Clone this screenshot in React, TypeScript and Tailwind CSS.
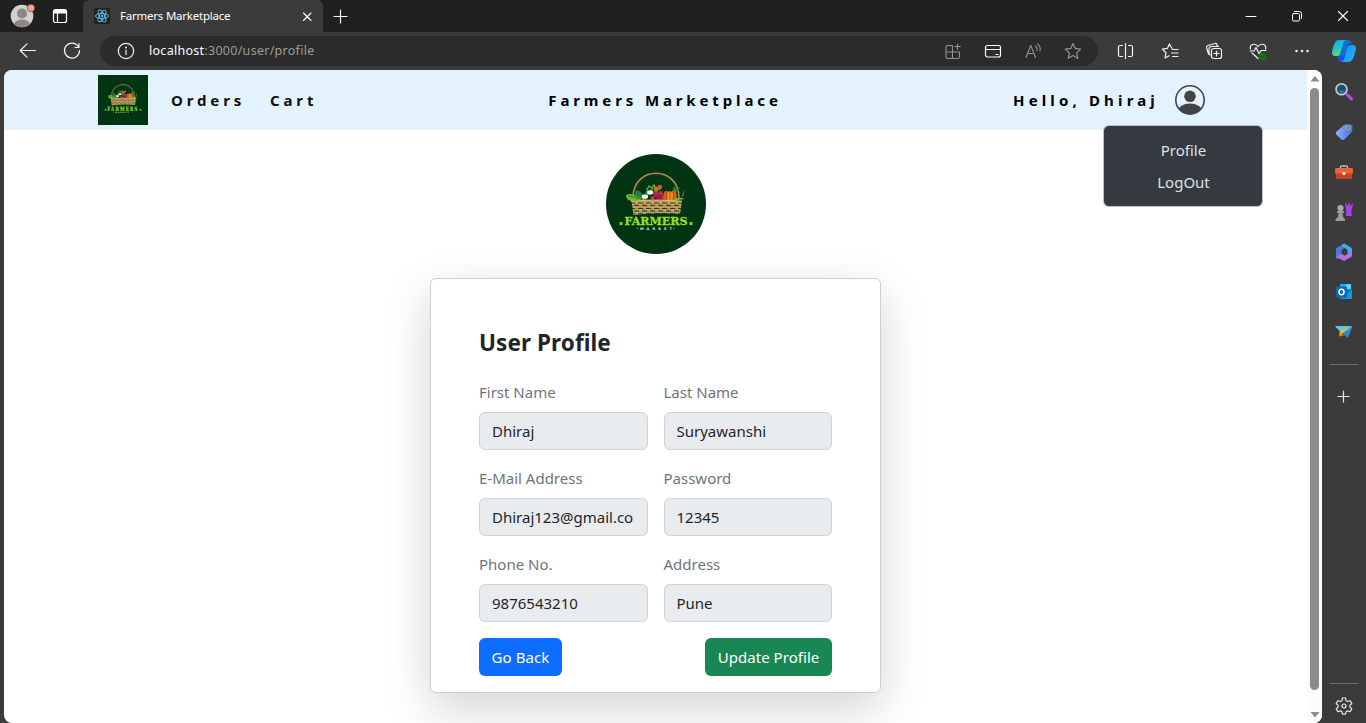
import type { ReactNode } from "react";

type IconProps = { size?: number; className?: string; children: ReactNode };

function Icon({ size = 20, className = "", children }: IconProps) {
  return (
    <svg width={size} height={size} viewBox={`0 0 ${size} ${size}`} fill="none" stroke="currentColor" strokeWidth="1.2" strokeLinecap="round" strokeLinejoin="round" className={`shrink-0 ${className}`}>
      {children}
    </svg>
  );
}

function FarmersLogo({ size, round = false, id }: { size: number; round?: boolean; id: string }) {
  return (
    <svg width={size} height={size} viewBox="0 0 100 100" className={round ? "rounded-full" : ""}>
      <defs>
        <pattern id={`${id}-weave`} width="8" height="5.4" patternUnits="userSpaceOnUse">
          <rect width="8" height="5.4" fill="#c9a362" />
          <path d="M0 .3h5M4 3h5M0 3h1" stroke="#173717" strokeWidth="1" />
          <path d="M6 0v2.4M2 3v2.4" stroke="#71602f" strokeWidth=".6" />
        </pattern>
        <pattern id={`${id}-bg`} width="19" height="16" patternUnits="userSpaceOnUse" patternTransform="rotate(-12)">
          <path d="M4 9l4-5" stroke="#12421f" strokeWidth=".7" />
        </pattern>
      </defs>
      <rect width="100" height="100" fill="#003412" />
      <rect width="100" height="100" fill={`url(#${id}-bg)`} />
      <path d="M27 44C27 11 73 11 73 44" fill="none" stroke="#b08d54" strokeWidth="1.600" />
      <path d="M28.300 43C29 13 71 13 71.700 43" fill="none" stroke="#4c4b22" strokeWidth=".5" />
      <path d="M29 45Q28 37 31 36Q38 39 38 45M39 40l2-7 2 5 4-7 0 7 5-5 0 7M66 38l2-6 3 3 3-2-2 5M75 44l3-9 0 6" fill="#24813a" />
      <path d="M41 36l2-4 3 2 2-3 2 5 4-1" stroke="#55ba34" strokeWidth="1.3" fill="none" />
      <circle cx="50" cy="35" r="2.400" fill="#e46a20" />
      <circle cx="54" cy="33" r="2.200" fill="#dc5823" />
      <ellipse cx="44" cy="38.500" rx="3" ry="2.2" fill="#f8faef" />
      <ellipse cx="39" cy="42.500" rx="3.2" ry="2.3" fill="#f5f6e7" />
      <circle cx="50" cy="41" r="2.6" fill="#b51e49" />
      <circle cx="54.500" cy="39.500" r="2.4" fill="#c92754" />
      <circle cx="53" cy="44" r="2.6" fill="#9a173f" />
      <circle cx="57.500" cy="43.500" r="2.3" fill="#cc2752" />
      <circle cx="46.500" cy="44" r="2" fill="#cb3455" />
      <ellipse cx="60.500" cy="41.500" rx="3.2" ry="4.6" fill="#d96016" />
      <ellipse cx="67.500" cy="41.500" rx="3.2" ry="4.6" fill="#df6415" />
      <ellipse cx="64" cy="42" rx="3" ry="4.8" fill="#f58b1d" />
      <path d="M64 38v8M60.500 38v7M67.500 38v7" stroke="#943e12" strokeWidth=".6" />
      <path d="M20 41q6-3 11 2l10 3-16 1q-5-1-5-6M66 46q5-4 13-1l-7 1q-4 3-8 1" fill="#6cbd2d" />
      <path d="M22 42q8 1 15 4M25 48q5-3 12-1" stroke="#235d20" strokeWidth=".8" fill="none" />
      <path d="M25.500 47Q50 45 76 47L74 60Q50 58 27.500 61Z" fill={`url(#${id}-weave)`} />
      <path d="M25 47.300Q50 45 76 47.300" stroke="#dfb571" strokeWidth="1.3" fill="none" />
      <g fill="#95df25" stroke="#95df25" strokeWidth=".35" fontFamily="DejaVu Serif" fontWeight="700" fontSize="11.8">
        <text x="18.500" y="71.200" textLength="63" lengthAdjust="spacingAndGlyphs">FARMERS</text>
      </g>
      <path d="M13.500 68h3v3h-3zM83.500 68h3v3h-3z" fill="#85cf27" />
      <text x="34" y="75.800" textLength="32" fill="#dce7d4" fontFamily="DejaVu Sans" fontWeight="700" fontSize="3.6">MARKET</text>
      <path d="M31 74.500h1M67.500 74.500h1" stroke="#dce7d4" strokeWidth=".8" />
    </svg>
  );
}

function TitleBar() {
  return (
    <div className="flex h-8 shrink-0 bg-[#202020] text-white">
      <div className="flex w-[83px] items-center pl-[10px]">
        <svg width="26" height="26" viewBox="0 0 26 26">
          <defs><clipPath id="account"><circle cx="12" cy="13" r="11.300" /></clipPath></defs>
          <circle cx="12" cy="13" r="11.300" fill="#d3d1ce" />
          <g fill="#8b8886" clipPath="url(#account)"><circle cx="12" cy="10.500" r="5" /><ellipse cx="12" cy="21.500" rx="8" ry="5" /></g>
          <circle cx="21" cy="5" r="3.800" fill="#ff9e98" stroke="#202020" strokeWidth=".5" />
        </svg>
        <Icon size={16} className="ml-[16px]">
          <rect x="1.500" y="1.500" width="13" height="13" rx="2" />
          <path d="M2 2.500h12v2.500H2z" fill="currentColor" /><path d="M5.500 5v9" />
        </Icon>
      </div>
      <div className="flex w-[240px] items-center rounded-t-md bg-[#3b3b3b] pr-[10px] pl-[11px]">
        <svg width="16" height="16" viewBox="0 0 16 16" fill="none" stroke="#5bc4e0" strokeWidth=".9">
          <rect width="16" height="16" rx="1.500" fill="#202226" stroke="none" />
          <ellipse cx="8" cy="8" rx="6.600" ry="2.600" /><ellipse cx="8" cy="8" rx="6.600" ry="2.600" transform="rotate(60 8 8)" /><ellipse cx="8" cy="8" rx="6.600" ry="2.600" transform="rotate(120 8 8)" />
          <circle cx="8" cy="8" r="1.200" fill="#5bc4e0" stroke="none" />
        </svg>
        <span className="ml-[10px] flex-1 text-[11.5px] tracking-[-0.22px] whitespace-nowrap">Farmers Marketplace</span>
        <Icon size={12}><path d="M2.500 3l7.500 7.500M10 3l-7.500 7.500" strokeWidth="1.100" /></Icon>
      </div>
      <div className="flex flex-1 items-center pl-[9px]"><Icon size={16}><path d="M8.500 2v13M2 8.500h13" /></Icon></div>
      <div className="flex">
        <div className="flex w-[46px] items-center justify-center"><Icon size={12}><path d="M1 6.500h10" strokeWidth="1" /></Icon></div>
        <div className="flex w-[46px] items-center justify-center"><Icon size={12}><rect x="1.500" y="3.500" width="7" height="7.500" rx="1.200" strokeWidth="1" /><path d="M3.500 1.500h5q2 0 2 2v5" strokeWidth="1" /></Icon></div>
        <div className="flex w-[46px] items-center justify-center"><Icon size={12}><path d="M1.500 1.500l9 9M10.500 1.500l-9 9" strokeWidth="1.100" /></Icon></div>
      </div>
    </div>
  );
}

function Toolbar() {
  return (
    <div className="flex h-[38px] shrink-0 items-center text-[#f2f2f2]">
      <div className="flex w-[100px] items-center gap-[24px] pl-[18px]">
        <Icon><path d="M17.500 9.500H2.500M9 2.800L2.300 9.500 9 16.200" /></Icon>
        <Icon><path d="M16.300 5.500A7.500 7.500 0 1 0 17.500 9.500M17 2.500v4h-4" /></Icon>
      </div>
      <div className="flex h-[30px] flex-1 items-center rounded-full bg-[#2b2b2b] pr-[5px] pl-[16px]">
        <Icon><circle cx="10" cy="10" r="7.700" /><path d="M10 9v4.500" /><circle cx="10" cy="6.500" r=".4" fill="currentColor" /></Icon>
        <span className="ml-[13px] flex-1 pt-px text-[12.5px] tracking-[0.28px] text-[#9b9b9b]"><span className="text-white">localhost</span>:3000/user/profile</span>
        <div className="flex text-[#929292]">
          <div className="flex w-10 justify-center"><Icon><path d="M9.500 4.500h-5q-1.500 0-1.500 1.500v10q0 1.500 1.500 1.500H15q1.500 0 1.500-1.500v-5H3M9.500 4.500v13M14.500 3v5.500M11.700 5.500h5.600" strokeWidth="1.100" /></Icon></div>
          <div className="flex w-10 justify-center text-white"><Icon><rect x="2.500" y="4.500" width="15" height="11.500" rx="2" /><path d="M2.500 8.500h15M13 13.500h2" /></Icon></div>
          <div className="flex w-10 justify-center"><Icon><path d="M3 16.500l4.800-12 4.700 12M4.500 12.500h6.500M12.500 5q2 1.500 1.500 4.500M14.500 3q3.500 2.500 2.500 7" strokeWidth="1.100" /></Icon></div>
          <div className="flex w-10 justify-center"><Icon><path d="M10 2.500l2.300 4.900 5.400.7-4 3.800 1 5.400-4.700-2.700-4.700 2.700 1-5.400-4-3.800 5.400-.7z" /></Icon></div>
        </div>
      </div>
      <div className="flex pl-[6px]">
        <div className="flex w-11 justify-center"><Icon><path d="M6.500 4.500H4q-1.500 0-1.500 1.500v8q0 1.500 1.500 1.500h2.500M12.500 4.500H15q1.500 0 1.500 1.500v8q0 1.500-1.500 1.500h-2.500M9.500 2.500v15" /></Icon></div>
        <div className="flex w-11 justify-center"><Icon><path d="M12 7.500L9.500 3 7.300 7.400l-5 .7 3.700 3.600-.9 5.300 4-2.200M12.500 8.500H18M11.500 12h6.500M12.500 15.500H18" /></Icon></div>
        <div className="flex w-11 justify-center"><Icon><rect x="7.500" y="7.500" width="10" height="10" rx="2" /><path d="M12.500 10v5M10 12.500h5M4.500 13L2.700 7q-.5-2 1.300-2.500L11 2.500q1.500-.3 2 1l.4 1.500M6 14q-1-1-1-3V8q0-2.500 2.500-2.500h7" /></Icon></div>
        <div className="flex w-11 justify-center"><Icon><path d="M2.500 8Q1.500 4.500 4.500 3.500 8 2.500 10 5.500q2-3 5.500-2 3 1.200 2 4.500M4 12l6 5.500M2 10h4l2-3.500 3 6 2-3h5" /><circle cx="14.500" cy="15.500" r="3.700" fill="#107c10" stroke="none" /><path d="M13 15.700l1.200 1 2-2.300" stroke="#2d422d" /></Icon></div>
        <div className="flex w-11 justify-center"><Icon><g fill="currentColor" stroke="none"><circle cx="4.500" cy="10" r="1.250" /><circle cx="10" cy="10" r="1.250" /><circle cx="15.500" cy="10" r="1.250" /></g></Icon></div>
      </div>
      <div className="flex w-[42px] items-center pl-[8px]">
        <svg width="24" height="24" viewBox="0 0 24 24">
          <defs>
            <linearGradient id="co1" x2=".4" y2="1"><stop stopColor="#139fed" /><stop offset=".5" stopColor="#20bfd5" /><stop offset="1" stopColor="#67dc77" /></linearGradient>
            <linearGradient id="co2" y2="1"><stop stopColor="#218aff" /><stop offset="1" stopColor="#18b6f5" /></linearGradient>
          </defs>
          <path d="M6 18h6l4-12q1-3 4-1-1-4-4-4h-5z" fill="#0872d5" />
          <path d="M7 1h8q-3 0-4 4L8 15q-.7 2-3 2H3q-3 0-3-4Q2 4 4 2q1-1 3-1z" fill="url(#co1)" />
          <path d="M8 23q3-1 4-4l3-10q1-3 3-3h3q3 0 3 4-2 9-4 11-1 2-4 2z" fill="url(#co2)" />
          <path d="M5 17h6q2 0 3-3l-2 6q-1 3-3 3-3 0-4-6z" fill="#214ee4" />
        </svg>
      </div>
    </div>
  );
}

const sidebarIcons = [
  <g key="search"><path d="M13 12.500l4.500 4.500" stroke="#b647f2" strokeWidth="3" strokeLinecap="round" /><circle cx="7.500" cy="7.300" r="5.400" fill="#174f70" stroke="#c3c6c8" strokeWidth="1.800" /><path d="M4 8.500q3.500 5 7 0" fill="#247eaa" /></g>,
  <g key="shopping"><path d="M2 10l8-7q1-.8 3-.8l4 .2q1.500 0 1.500 2l-.2 4q0 1-1 2l-7 7q-1.500 1-3 0l-5-5q-1-1.500-.3-2.400z" fill="url(#tag)" /><circle cx="14.300" cy="6" r="1.600" fill="#514f34" stroke="#f7c923" /></g>,
  <g key="tools"><path d="M6.500 6.500V5q0-1 1-1h5q1 0 1 1v1.500" fill="none" stroke="#b9bfc3" strokeWidth="1.400" /><rect x="1" y="6" width="18" height="6" rx="1.200" fill="#ec623a" /><path d="M2 11.500h16V16q0 1-1 1H3q-1 0-1-1z" fill="#c64120" /><circle cx="10" cy="11.500" r="1.700" fill="#d6dedf" /></g>,
  <g key="games"><path d="M11 1.500h1.800v2h1.500v-2h1.800v2h1.500v-2H19l-.7 5-1 1 .5 6.500H12l.3-6z" fill="#a942eb" /><circle cx="6.500" cy="6" r="3.100" fill="#a8a8a8" /><path d="M3 9h7v2H8.500L9 15l2 2v2H1.500v-2L4 15l.5-4H3z" fill="#9a9a9a" /></g>,
  <g key="m365"><path d="M2 6.500L9 2q1-.8 2 0l3 1.800-6 3.700v7L3 17.300q-1-.8-1-2z" fill="url(#mso)" /><path d="M10 1.500l7 4q1 .5 1 2v6l-5-2.500V7.500L7.500 4z" fill="#3aaeea" /><path d="M2.500 14.500L8 11.500l2.500 2 7.500-4v4q0 1-1 1.500l-6 3.500q-1 .5-2 0L3 15.500z" fill="#af72df" /><path d="M7.500 8.200L10.500 6.500l3 1.700v3.600l-3 1.700-3-1.700z" fill="#3b3b3b" /></g>,
  <g key="outlook"><path d="M6 2h11v5H6z" fill="#28a8ea" /><path d="M12 2h5v5h-5z" fill="#50d9ff" /><path d="M5 7h13v10H5z" fill="#087cc5" /><path d="M18 8v9H7z" fill="#1596e5" /><rect x="2" y="4.500" width="11" height="11" rx="1" fill="#0967b5" /><ellipse cx="7.500" cy="10" rx="2.500" ry="2.700" fill="none" stroke="#fff" strokeWidth="1.500" /></g>,
  <g key="drop"><path d="M1 4l17.500.2L14 16l-5-4z" fill="#2a89df" /><path d="M1 4l17.500.2L6 9.500z" fill="#5fcbed" /><path d="M18 4.500L6 9l-1 5.500 3-3z" fill="#f9b719" /><path d="M5 14.500l3-3 2 2z" fill="#d47a18" /></g>,
];

function Sidebar() {
  return (
    <aside className="flex w-11 shrink-0 flex-col items-center pt-[2px] text-[#e7e7e7]">
      <svg width="0" height="0"><defs><linearGradient id="tag" x2="1"><stop stopColor="#91adff" /><stop offset="1" stopColor="#3f72e9" /></linearGradient><linearGradient id="mso" y2="1"><stop stopColor="#328fe0" /><stop offset="1" stopColor="#7652ca" /></linearGradient></defs></svg>
      {sidebarIcons.map((icon, i) => (
        <div key={i} className="flex h-10 w-full items-center justify-center"><svg width="20" height="20" viewBox="0 0 20 20">{icon}</svg></div>
      ))}
      <div className="mt-[12px] h-px w-7 bg-[#6c6c6c]" />
      <Icon className="mt-[22px]" size={20}><path d="M9.500 4v11M4 9.500h11" /></Icon>
      <div className="mt-auto h-px w-7 bg-[#6c6c6c]" />
      <Icon className="mt-[12px] mb-[7px]" size={20}>
        <path d="M8.500 2h3l.6 2.700 1.500.8 2.500-.8 1.700 2.800-1.900 1.900v1.600l1.900 1.900-1.700 2.800-2.500-.8-1.500.8-.6 2.500h-3l-.6-2.500-1.500-.8-2.500.8-1.700-2.800L4.100 11V9.400L2.200 7.500l1.700-2.800 2.500.8 1.500-.8z" /><circle cx="10" cy="10" r="2" />
      </Icon>
    </aside>
  );
}

function NavBar() {
  return (
    <nav className="relative grid h-[60px] grid-cols-3 items-center bg-[#e3f2fd] text-[15px] font-bold tracking-[3.87px] text-[#000]">
      <div className="flex items-center pl-[94px]">
        <FarmersLogo size={50} id="nav" />
        <span className="ml-[23px] w-[99px] text-[#111]">Orders</span>
        <span className="text-[#111]">Cart</span>
      </div>
      <span className="pl-[110px] whitespace-nowrap">Farmers Marketplace</span>
      <div className="flex items-center justify-end pr-[102px] whitespace-nowrap">
        <span className="w-[162px] tracking-[4.15px]">Hello, Dhiraj</span>
        <svg width="30" height="30" viewBox="0 0 30 30">
          <defs><clipPath id="user"><circle cx="15" cy="15" r="14.300" /></clipPath></defs>
          <circle cx="15" cy="11.300" r="5.800" fill="#414548" />
          <ellipse cx="15" cy="26" rx="12" ry="7.500" fill="#414548" clipPath="url(#user)" />
          <circle cx="15" cy="15" r="14.200" fill="none" stroke="#414548" strokeWidth="1.600" />
        </svg>
      </div>
      <div className="absolute top-[55px] right-[44px] z-10 flex h-[82px] w-[160px] flex-col items-center rounded-md border border-[#bfc2c5] bg-[#343a40] pt-2 pl-px text-[15px] font-normal tracking-normal text-[#dee2e6]">
        <span className="h-8 leading-8">Profile</span>
        <span className="h-8 leading-8">LogOut</span>
      </div>
    </nav>
  );
}

const fields = [
  { label: "First Name", value: "Dhiraj" },
  { label: "Last Name", value: "Suryawanshi" },
  { label: "E-Mail Address", value: "Dhiraj123@gmail.co" },
  { label: "Password", value: "12345" },
  { label: "Phone No.", value: "9876543210" },
  { label: "Address", value: "Pune" },
];

function ProfileCard() {
  return (
    <section className="h-[415px] w-[451px] shrink-0 rounded-md border border-[#cfcfcf] bg-white px-12 pt-[49px] text-[15px] text-[#212529] shadow-[0_16px_48px_rgba(0,0,0,0.175)]">
      <h1 className="mb-[22px] h-[30px] text-[22.5px] leading-[30px] font-bold tracking-[0.08px]">User Profile</h1>
      <div className="grid grid-cols-2 gap-4">
        {fields.map((f) => (
          <label key={f.label} className="flex min-w-0 flex-col gap-2">
            <span className="h-6 leading-6 text-[#6c757d]">{f.label}</span>
            <span className="h-[38px] overflow-hidden rounded-md border border-[#ced4da] bg-[#e9ecef] px-3 leading-[36px] whitespace-nowrap">{f.value}</span>
          </label>
        ))}
      </div>
      <div className="mt-4 flex justify-between text-white">
        <button className="h-[38px] w-[83px] rounded-md bg-[#0d6efd] tracking-[0.1px] whitespace-nowrap">Go Back</button>
        <button className="h-[38px] w-[127px] rounded-md bg-[#198754] tracking-[0.05px] whitespace-nowrap">Update Profile</button>
      </div>
    </section>
  );
}

export default function App() {
  return (
    <div className="flex h-[723px] w-[1366px] flex-col overflow-hidden bg-[#3b3b3b] font-['Noto_Sans','Open_Sans',sans-serif]">
      <TitleBar />
      <Toolbar />
      <div className="flex min-h-0 flex-1 pl-1">
        <div className="flex min-w-0 flex-1 overflow-hidden rounded-lg bg-white">
          <main className="flex min-w-0 flex-1 flex-col">
            <NavBar />
            <div className="flex flex-col items-center gap-6 pt-6">
              <FarmersLogo size={100} round id="hero" />
              <ProfileCard />
            </div>
          </main>
          <div className="z-10 flex w-[15px] flex-col items-center bg-[#fcfcfc]">
            <svg width="10" height="18" viewBox="0 0 10 18"><path d="M.5 11.500L5 6l4.500 5.500z" fill="#8b8b8b" /></svg>
            <div className="h-[602px] w-[9px] rounded-full bg-[#8b8b8b]" />
            <svg className="mt-auto" width="10" height="18" viewBox="0 0 10 18"><path d="M.5 7L5 12.500 9.500 7z" fill="#8b8b8b" /></svg>
          </div>
        </div>
        <Sidebar />
      </div>
    </div>
  );
}
